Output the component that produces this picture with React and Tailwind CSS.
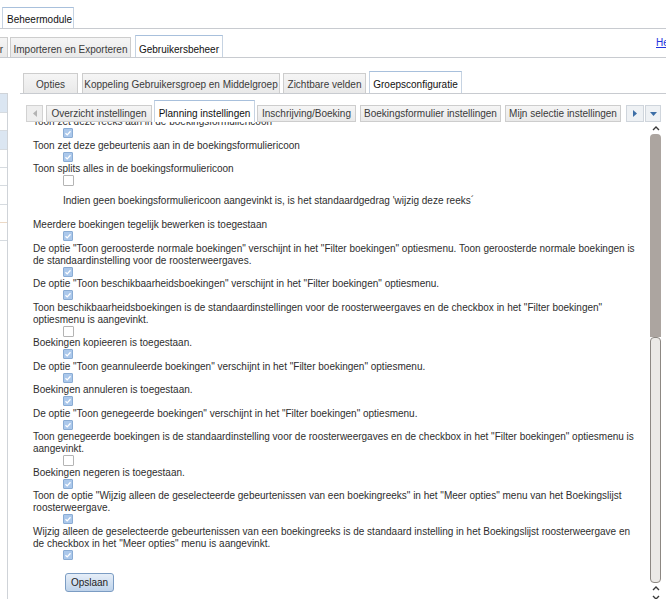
import React from "react";

function Tab({ sel, full, className = "", children }) {
  const base = sel
    ? "bg-white border-[#c6d3e2] border-t-[#a8c0dc] text-[#111]"
    : "bg-gradient-to-b from-[#f5f5f5] to-[#e9e9e9] border-[#cdcdcd] text-[#3a3a3a]";
  const b = full ? "border" : "border border-b-0";
  return (
    <div className={`flex shrink-0 items-end justify-center whitespace-nowrap leading-[12px] ${b} ${base} ${className}`}>
      {children}
    </div>
  );
}

function Box({ checked }) {
  if (checked) {
    return (
      <div className="flex h-[10px] w-[10px] items-center justify-center rounded-[1px] border border-[#8aacd4] bg-[#abc8eb]">
        <svg width="8" height="8" viewBox="0 0 8 8">
          <path d="M1.5 4.2 L3.2 5.9 L6.5 2.2" fill="none" stroke="#ffffff" strokeWidth="1.3" />
        </svg>
      </div>
    );
  }
  return <div className="h-[11px] w-[11px] rounded-[1px] border border-[#b4b4b4] bg-white" />;
}

const items = [
  { t: "Toon zet deze reeks aan in de boekingsformuliericoon", c: true },
  { t: "Toon zet deze gebeurtenis aan in de boekingsformuliericoon", c: true },
  { t: "Toon splits alles in de boekingsformuliericoon", c: false, note: true },
  { t: "Meerdere boekingen tegelijk bewerken is toegestaan", c: true },
  {
    t: "De optie \"Toon geroosterde normale boekingen\" verschijnt in het \"Filter boekingen\" optiesmenu. Toon geroosterde normale boekingen is de standaardinstelling voor de roosterweergaves.",
    c: true,
  },
  { t: "De optie \"Toon beschikbaarheidsboekingen\" verschijnt in het \"Filter boekingen\" optiesmenu.", c: true },
  {
    t: "Toon beschikbaarheidsboekingen is de standaardinstellingen voor de roosterweergaves en de checkbox in het \"Filter boekingen\" optiesmenu is aangevinkt.",
    c: false,
  },
  { t: "Boekingen kopieeren is toegestaan.", c: true },
  { t: "De optie \"Toon geannuleerde boekingen\" verschijnt in het \"Filter boekingen\" optiesmenu.", c: true },
  { t: "Boekingen annuleren is toegestaan.", c: true },
  { t: "De optie \"Toon genegeerde boekingen\" verschijnt in het \"Filter boekingen\" optiesmenu.", c: true },
  {
    t: "Toon genegeerde boekingen is de standaardinstelling voor de roosterweergaves en de checkbox in het \"Filter boekingen\" optiesmenu is aangevinkt.",
    c: false,
  },
  { t: "Boekingen negeren is toegestaan.", c: true },
  {
    t: "Toon de optie \"Wijzig alleen de geselecteerde gebeurtenissen van een boekingreeks\" in het \"Meer opties\" menu van het Boekingslijst roosterweergave.",
    c: true,
  },
  {
    t: "Wijzig alleen de geselecteerde gebeurtenissen van een boekingreeks is de standaard instelling in het Boekingslijst roosterweergave en de checkbox in het \"Meer opties\" menu is aangevinkt.",
    c: true,
  },
];

function Chevron({ down }) {
  return (
    <svg width="8" height="5" viewBox="0 0 8 5">
      <path
        d={down ? "M1 1 L4 4 L7 1" : "M1 4 L4 1 L7 4"}
        fill="none"
        stroke="#3a3a3a"
        strokeWidth="1.4"
      />
    </svg>
  );
}

export default function App() {
  return (
    <div className="flex h-[599px] w-[666px] flex-col overflow-hidden bg-white font-['Liberation_Sans',Arial,sans-serif] text-[10px] text-[#2e2e2e]">
      {/* Row 1 */}
      <div className="flex h-[29px] shrink-0 items-end border-b border-[#c8cbd0] pl-[2px]">
        <Tab sel className="h-[21px] w-[72px] !justify-start pb-[2px] pl-[4px]">
          Beheermodule
        </Tab>
      </div>

      {/* Row 2 */}
      <div className="flex h-[29px] shrink-0 items-end border-b border-[#c8cbd0]">
        <Tab className="-ml-[10px] h-[20px] w-[18px] !justify-end pb-[1px] pr-[4px]">r</Tab>
        <Tab className="ml-[2px] h-[20px] w-[121px] pb-[1px]">Importeren en Exporteren</Tab>
        <Tab sel className="ml-[4px] h-[22px] w-[88px] pb-[1px]">
          Gebruikersbeheer
        </Tab>
        <div className="flex-1" />
        <div className="mb-auto mt-[8px] w-[10px] whitespace-nowrap leading-[12px]">
          <a className="text-[#2233dd] underline">Help</a>
        </div>
      </div>

      {/* Body */}
      <div className="flex min-h-0 flex-1">
        {/* left sidebar */}
        <div className="w-[8px] shrink-0 pt-[35px]">
          <div className="h-full border-r border-t border-[#cfd3d8]">
            <div className="h-[19px] border-b border-[#d6dbe0] bg-[#dbe6f2]" />
            <div className="h-[18px] border-b border-[#d6dbe0]" />
            <div className="h-[19px] border-b border-[#d6dbe0] bg-[#dbe6f2]" />
            <div className="h-[18px] border-b border-[#d6dbe0]" />
            <div className="h-[18px] border-b border-[#d6dbe0]" />
            <div className="h-[19px] border-b border-[#d6dbe0]" />
            <div className="h-[18px] border-b border-[#ecd9c6]" />
            <div className="h-[18px] border-b border-[#d6dbe0]" />
          </div>
        </div>

        {/* main */}
        <div className="ml-[12px] flex min-w-0 flex-1 flex-col">
          {/* Row 3 */}
          <div className="flex h-[36px] shrink-0 items-end border-b border-[#c8cbd0] pl-[3px]">
            <Tab className="h-[20px] w-[55px] pb-[2px]">Opties</Tab>
            <Tab className="ml-[4px] h-[20px] w-[198px] pb-[2px]">Koppeling Gebruikersgroep en Middelgroep</Tab>
            <Tab className="ml-[3px] h-[20px] w-[83px] pb-[2px]">Zichtbare velden</Tab>
            <Tab sel className="ml-[3px] h-[22px] w-[93px] pb-[2px]">
              Groepsconfiguratie
            </Tab>
          </div>

          {/* Row 4 */}
          <div className="flex h-[28px] shrink-0 items-end pl-[6px]">
            <div className="flex h-[17px] w-[17px] shrink-0 items-center justify-center border border-[#d2d2d2] bg-[#eeeeee]">
              <svg width="4" height="7" viewBox="0 0 4 7">
                <path d="M4 0 L0 3.5 L4 7 Z" fill="#b3b3b3" />
              </svg>
            </div>
            <Tab full className="ml-[3px] h-[17px] w-[106px] pb-[1px]">
              Overzicht instellingen
            </Tab>
            <Tab sel className="ml-[2px] h-[22px] w-[101px] pb-[2px]">
              Planning instellingen
            </Tab>
            <Tab full className="ml-[2px] h-[17px] w-[99px] pb-[1px]">
              Inschrijving/Boeking
            </Tab>
            <Tab full className="ml-[4px] h-[17px] w-[141px] pb-[1px]">
              Boekingsformulier instellingen
            </Tab>
            <Tab full className="ml-[4px] h-[17px] w-[116px] pb-[1px]">
              Mijn selectie instellingen
            </Tab>
            <div className="ml-[5px] flex h-[17px] w-[18px] shrink-0 items-center justify-center border border-[#cfd5dc] bg-[#eef1f4]">
              <svg width="4" height="7" viewBox="0 0 4 7">
                <path d="M0 0 L4 3.5 L0 7 Z" fill="#3d6ea6" />
              </svg>
            </div>
            <div className="ml-[1px] flex h-[17px] w-[16px] shrink-0 items-center justify-center border border-[#cfd5dc] bg-[#eef1f4]">
              <svg width="7" height="4" viewBox="0 0 7 4">
                <path d="M0 0 L7 0 L3.5 4 Z" fill="#3d6ea6" />
              </svg>
            </div>
          </div>

          {/* Content + scrollbar */}
          <div className="flex min-h-0 flex-1">
            <div className="w-[625px] shrink-0 overflow-hidden pl-[13px]">
              <div className="-mt-[6px] w-[610px]">
                {items.map((it, i) => (
                  <React.Fragment key={i}>
                    <div className="leading-[12px]">{it.t}</div>
                    <div className="h-[11.5px] pl-[30px]">
                      <Box checked={it.c} />
                    </div>
                    {it.note && (
                      <div className="pb-[12.5px] pl-[30px] pt-[8px] leading-[12px]">
                        Indien geen boekingsformuliericoon aangevinkt is, is het standaardgedrag 'wijzig deze reeks´
                      </div>
                    )}
                  </React.Fragment>
                ))}
                <div className="ml-[32px] mt-[12px] flex h-[19px] w-[49px] items-center justify-center rounded-[3px] border border-[#7b9cc3] bg-gradient-to-b from-[#e6eef8] to-[#bed3ea] text-[#222]">
                  Opslaan
                </div>
              </div>
            </div>

            {/* scrollbar */}
            <div className="ml-[4px] flex w-[13px] shrink-0 flex-col">
              <div className="flex h-[12px] shrink-0 items-center justify-center">
                <Chevron />
              </div>
              <div className="mx-[1px] h-[203px] shrink-0 rounded-t-[4px] bg-[#aca5a0]" />
              <div className="mx-[1px] h-[246px] shrink-0 rounded-[4px] border border-[#8d8883] bg-[#ebe9e6]" />
              <div className="flex h-[10px] shrink-0 items-center justify-center">
                <Chevron />
              </div>
              <div className="flex h-[8px] shrink-0 items-center justify-center">
                <Chevron down />
              </div>
            </div>
          </div>
        </div>
      </div>
    </div>
  );
}
